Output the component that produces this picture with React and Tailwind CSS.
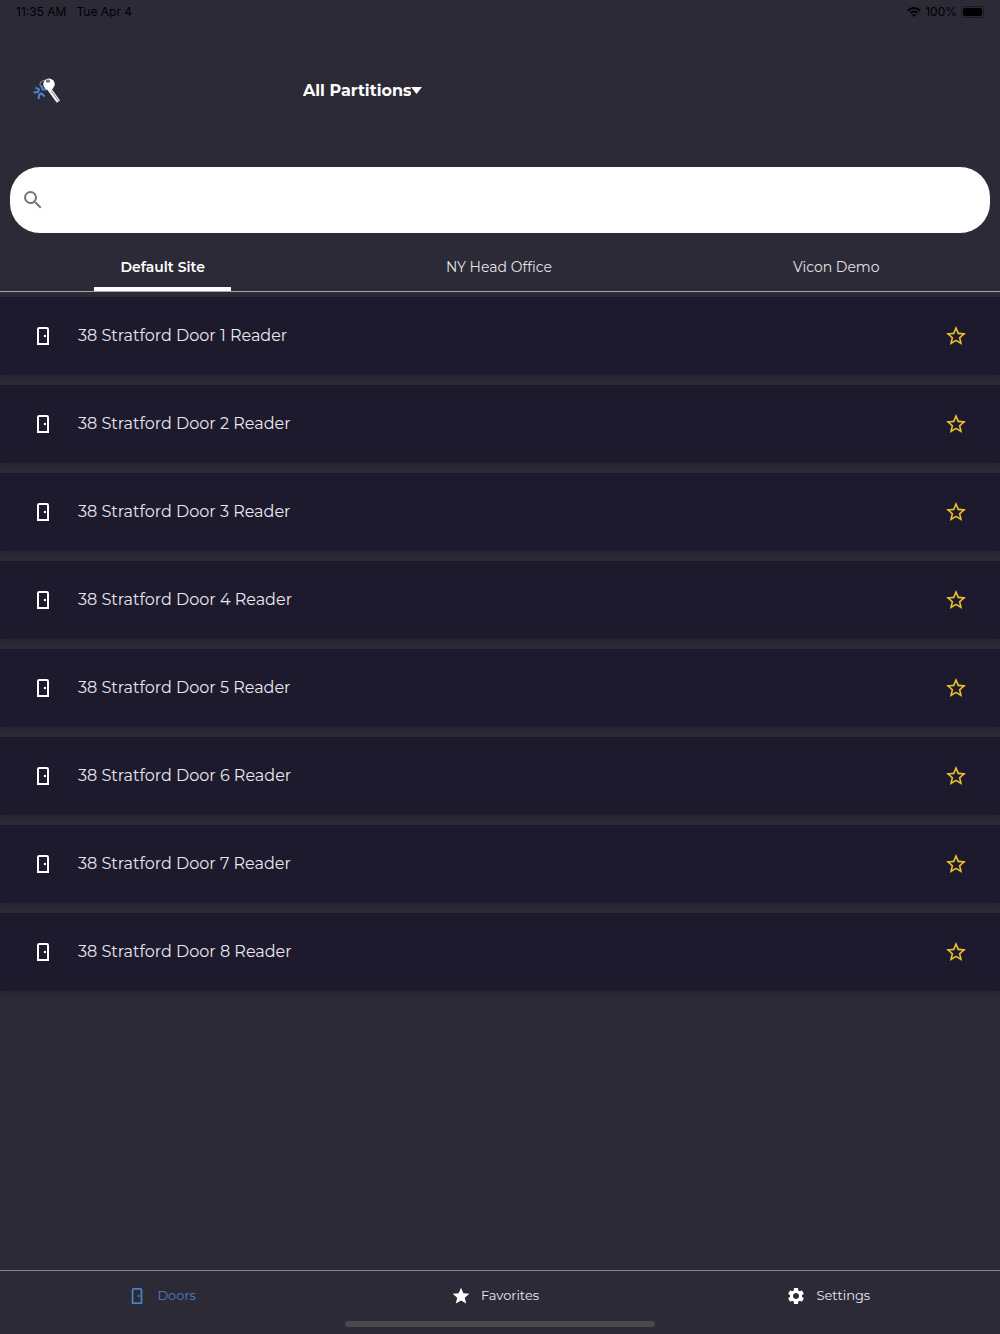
import React, { useState } from 'react';
import { MdSearch, MdStar, MdStarBorder, MdSettings } from 'react-icons/md';

const sites = ['Default Site', 'NY Head Office', 'Vicon Demo'];

const doors = [1, 2, 3, 4, 5, 6, 7, 8].map((n) => ({
  id: n,
  name: `38 Stratford Door ${n} Reader`
}));

const DoorIcon = ({ className }) => (
  <svg viewBox="0 0 12 18" fill="none" className={className} aria-hidden="true">
    <path d="M1 17V2.2Q1 1 2.2 1H9.8Q11 1 11 2.2V17Z" stroke="currentColor" strokeWidth="2" />
    <circle cx="8" cy="9" r="1.2" fill="currentColor" />
  </svg>
);

const KeyLogo = () => (
  <svg viewBox="0 0 28 26" fill="none" className="h-[26px] w-7" role="img" aria-label="Key">
    <g stroke="#4a86cf" strokeWidth="2">
      <path d="M2.5 9.5 6 11.5 5 14 0.5 14.5" />
      <path d="M8.5 7.5 9.5 11.5 14 11.5" />
      <path d="M5.5 21 6.2 16.5 8.5 15.5 11.5 18.5" />
    </g>
    <path d="M8 9C5.5 5.5 8 1.8 14 2" stroke="#77758a" strokeWidth="1.2" />
    <path d="M15.5 10 25.4 23.6" stroke="#f2f2f2" strokeWidth="4" />
    <path d="M18.4 13 25.4 22.8" stroke="#8a8993" strokeWidth="1" />
    <circle cx="16" cy="6.2" r="5.7" fill="#fff" />
    <ellipse cx="15" cy="3" rx="2.1" ry="1.5" fill="#55535f" />
    <path d="M13.8 3.1C15 1.8 16 2.2 16.2 3.4" stroke="#b5b4bc" strokeWidth="0.7" />
  </svg>
);

const WifiIcon = () => (
  <svg viewBox="0 0 14 10" className="h-[10px] w-[14px]" fill="none" stroke="currentColor" strokeWidth="2">
    <path d="M1 3.7C4.4 0.2 9.6 0.2 13 3.7" />
    <path d="M3.4 6.1C5.5 4.1 8.5 4.1 10.6 6.1" />
    <path d="M5 7.8Q7 6.2 9 7.8L7 10Z" fill="currentColor" stroke="none" />
  </svg>
);

const StatusBar = () => (
  <div className="flex h-6 items-center justify-between pr-[14px] pl-4 font-['Inter',sans-serif] text-[12px] text-black">
    <div className="flex gap-[10px]">
      <span>11:35 AM</span>
      <span>Tue Apr 4</span>
    </div>
    <div className="flex items-center gap-1">
      <WifiIcon />
      <span>100%</span>
      <svg viewBox="0 0 25 12" className="h-3 w-[25px]" fill="none">
        <rect x="0.5" y="0.5" width="22" height="11" rx="3.5" stroke="#191823" />
        <rect x="2" y="2" width="19" height="8" rx="2" fill="#000" />
        <path d="M24 4.5Q25.3 6 24 7.5Z" fill="#191823" />
      </svg>
    </div>
  </div>
);

const App = () => {
  const [site, setSite] = useState(sites[0]);
  const [query, setQuery] = useState('');
  const [favorites, setFavorites] = useState([]);
  const [page, setPage] = useState('Doors');

  const toggleFavorite = (id) => {
    setFavorites((prev) => (prev.includes(id) ? prev.filter((f) => f !== id) : [...prev, id]));
  };

  const visibleDoors = doors.filter((door) => door.name.toLowerCase().includes(query.toLowerCase()));

  const navItems = [
    { name: 'Doors', icon: <DoorIcon className="h-4 w-5" /> },
    { name: 'Favorites', icon: <MdStar className="size-5" /> },
    { name: 'Settings', icon: <MdSettings className="size-5" /> }
  ];

  return (
    <div className="flex min-h-screen flex-col bg-[#2d2a37] font-['Montserrat','Inter',sans-serif] text-white">
      <StatusBar />

      <header className="flex h-[133px] items-center">
        <div className="w-[30%] pl-[33px]">
          <KeyLogo />
        </div>
        <div className="flex items-center pl-[3px]">
          <select
            aria-label="Partition"
            className="h-8 appearance-none bg-transparent text-[16px] font-bold text-white [field-sizing:content]"
          >
            <option>All Partitions</option>
          </select>
          <svg viewBox="0 0 11 7" className="h-[7px] w-[11px]" fill="currentColor" aria-hidden="true">
            <path d="M0 0H11L5.5 7Z" />
          </svg>
        </div>
      </header>

      {/* Search */}
      <label className="mx-[10px] mt-[10px] flex h-[66px] items-center gap-3 rounded-[30px] bg-white px-[11px] text-[#757575]">
        <MdSearch className="size-6" />
        <input
          type="text"
          aria-label="Search doors"
          value={query}
          onChange={(e) => setQuery(e.target.value)}
          className="h-full flex-1 text-[16px] text-black outline-none"
        />
      </label>

      {/* Sites */}
      <div role="tablist" className="mt-[10px] flex justify-around border-b border-[#a9a7af]">
        {sites.map((name) => (
          <button
            key={name}
            role="tab"
            aria-selected={name === site}
            onClick={() => setSite(name)}
            className={`h-12 border-b-4 px-[26px] pt-1 text-[14px] ${
              name === site ? 'border-white font-semibold' : 'border-transparent text-[#e3e2e6]'
            }`}
          >
            {name}
          </button>
        ))}
      </div>

      <ul className="mt-[5px] flex flex-1 flex-col gap-[10px]">
        {visibleDoors.map((door) => (
          <li
            key={door.id}
            className="flex h-[78px] items-center bg-[#1e1a2e] pr-8 pl-[37px] shadow-[0_2px_4px_rgba(0,0,0,0.2)]"
          >
            <DoorIcon className="h-[18px] w-3" />
            <span className="ml-[29px] flex-1 text-[16px] text-[#e8e7ec]">{door.name}</span>
            <button
              aria-label={`Favorite ${door.name}`}
              aria-pressed={favorites.includes(door.id)}
              onClick={() => toggleFavorite(door.id)}
              className="text-[#edc02d]"
            >
              {favorites.includes(door.id) ? <MdStar className="size-6" /> : <MdStarBorder className="size-6" />}
            </button>
          </li>
        ))}
      </ul>

      <footer className="flex h-16 flex-col items-center border-t border-[#85828f]">
        <nav className="grid w-full grid-cols-3">
          {navItems.map(({ name, icon }) => (
            <button
              key={name}
              onClick={() => setPage(name)}
              className={`flex h-[50px] items-center justify-center gap-[10px] pr-[10px] text-[13px] ${
                name === page ? 'text-[#4a80c4]' : 'text-[#e8e7ec]'
              }`}
            >
              <span className={name === page ? '' : 'text-white'}>{icon}</span>
              {name}
            </button>
          ))}
        </nav>
        <div className="h-[6px] w-[31%] rounded-full bg-[#4a4a4a]" />
      </footer>
    </div>
  );
};

export default App;
